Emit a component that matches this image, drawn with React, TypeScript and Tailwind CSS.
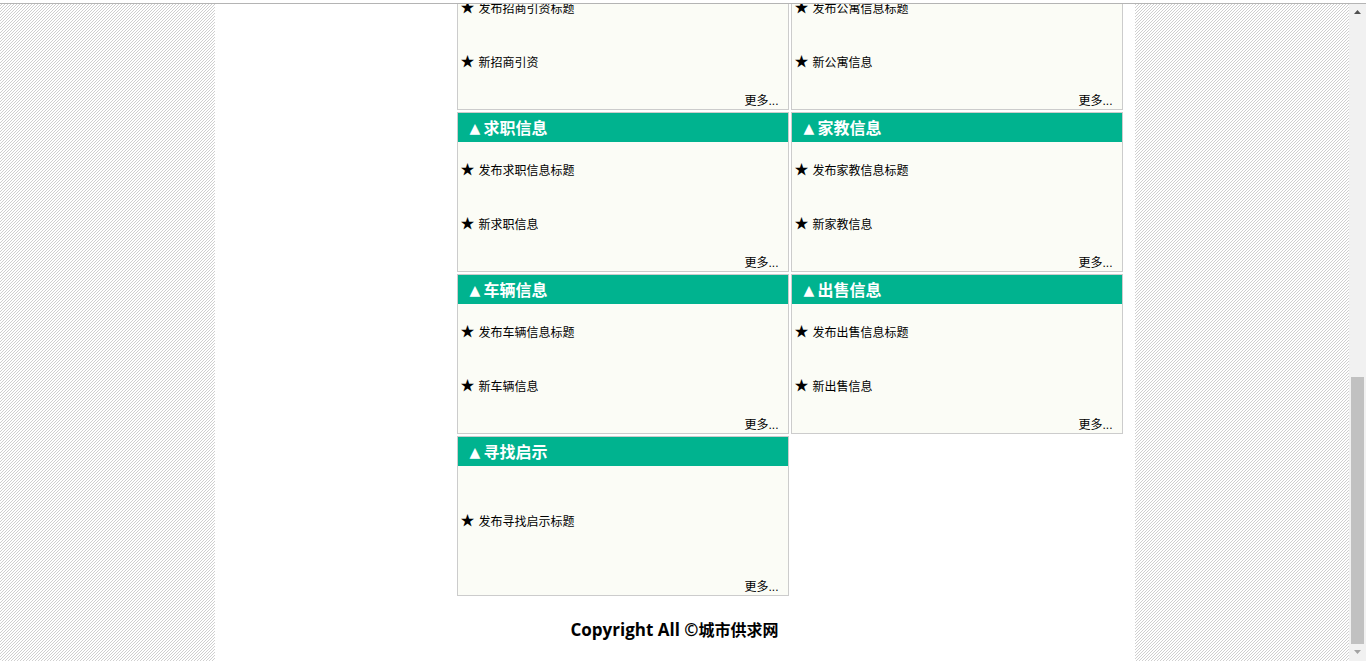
const font = "font-['Liberation_Sans','Noto_Sans_CJK_SC',sans-serif]";

const rows = [
  [
    { title: "招商引资", items: ["发布招商引资标题", "新招商引资"] },
    { title: "公寓信息", items: ["发布公寓信息标题", "新公寓信息"] },
  ],
  [
    { title: "求职信息", items: ["发布求职信息标题", "新求职信息"] },
    { title: "家教信息", items: ["发布家教信息标题", "新家教信息"] },
  ],
  [
    { title: "车辆信息", items: ["发布车辆信息标题", "新车辆信息"] },
    { title: "出售信息", items: ["发布出售信息标题", "新出售信息"] },
  ],
  [{ title: "寻找启示", items: ["发布寻找启示标题"] }],
];

function Card({ title, items }: { title: string; items: string[] }) {
  return (
    <div className="w-[332px] h-[160px] border border-[#cccccc] flex flex-col bg-[#fbfcf6]">
      <div className="h-[29px] bg-[#00b38f] text-white font-bold text-[16px] leading-[31px] pl-[12px] flex">
        <span className="w-[14px] font-['DejaVu_Sans'] font-normal text-[14px]">▲</span>
        <span>{title}</span>
      </div>
      <div className="flex-1 flex flex-col justify-around pl-[3px] pt-[1px] pb-[19px]">
        {items.map((item) => (
          <div key={item} className="flex items-center h-[18px] text-[12px] text-black">
            <span className="w-[18px] text-[14px] leading-none -mt-[3px]">★</span>
            <span className="mt-[1px]">{item}</span>
          </div>
        ))}
      </div>
      <div className="h-[0px] relative">
        <span className="absolute right-[9px] bottom-[0px] text-[12px] leading-[16px] text-black">更多...</span>
      </div>
    </div>
  );
}

export default function App() {
  return (
    <div className={`h-[661px] w-[1366px] overflow-hidden flex flex-col bg-white ${font}`}>
      <div className="h-[3px] bg-white shrink-0" />
      <div className="h-px bg-[#b4b4b4] shrink-0" />
      <div className="flex flex-1 min-h-0">
        <div className="w-[1349px] flex justify-center bg-[linear-gradient(135deg,#ffffff_25%,#cfcfcf_25%,#cfcfcf_50%,#ffffff_50%,#ffffff_75%,#cfcfcf_75%)] bg-size-[3px_3px]">
          <div className="w-[920px] h-full bg-white overflow-hidden pl-[242px]">
            <div className="-mt-[54px] flex flex-col gap-[2px]">
              {rows.map((row) => (
                <div key={row[0].title} className="flex gap-[2px]">
                  {row.map((card) => (
                    <Card key={card.title} title={card.title} items={card.items} />
                  ))}
                </div>
              ))}
            </div>
            <div className="w-[332px] mt-[21px] pl-[114px] whitespace-nowrap text-[17px] font-bold leading-[26px] text-black font-['Open_Sans','Noto_Sans_CJK_SC',sans-serif]">
              Copyright All ©<span className="text-[16px]">城市供求网</span>
            </div>
          </div>
        </div>
        <div className="w-[17px] bg-[#f1f1f1] flex flex-col items-center">
          <svg width="17" height="17" viewBox="0 0 17 17" className="shrink-0">
            <path d="M8.5 6 L12 10 H5 Z" fill="#505050" />
          </svg>
          <div className="flex-1" />
          <div className="w-[13px] h-[267px] bg-[#c1c1c1] shrink-0" />
          <svg width="17" height="17" viewBox="0 0 17 17" className="shrink-0">
            <path d="M5 6 H12 L8.5 10 Z" fill="#a3a3a3" />
          </svg>
        </div>
      </div>
    </div>
  );
}
